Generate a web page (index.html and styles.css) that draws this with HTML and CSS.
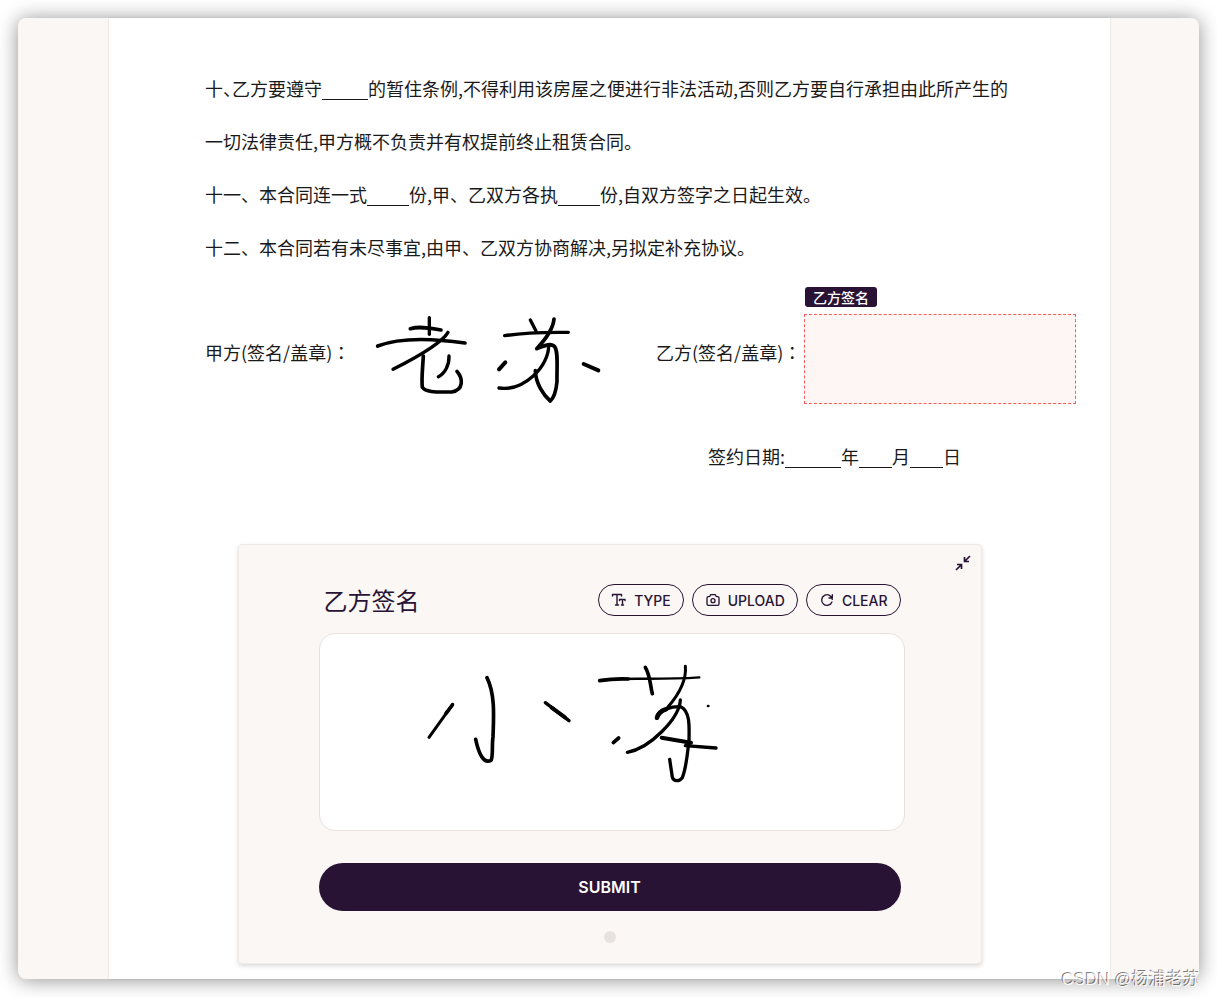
FILE: index.html
```html
<!DOCTYPE html>
<html lang="zh-CN">
<head>
    <meta charset="UTF-8">
    <meta name="viewport" content="width=device-width, initial-scale=1.0">
    <title>乙方签名</title>
    <link rel="stylesheet" href="styles.css">
</head>
<body>
<div class="window">
    <main class="page">
        <section class="contract">
            <p>十<span class="half">、</span>乙方要遵守<span class="blank blank-lg"></span>的暂住条例,不得利用该房屋之便进行非法活动,否则乙方要自行承担由此所产生的<br>一切法律责任,甲方概不负责并有权提前终止租赁合同。</p>
            <p>十一、本合同连一式<span class="blank blank-md"></span>份,甲、乙双方各执<span class="blank blank-md"></span>份,自双方签字之日起生效。</p>
            <p>十二、本合同若有未尽事宜,由甲、乙双方协商解决,另拟定补充协议。</p>

            <div class="sign-row">
                <span>甲方(签名/盖章)<span class="colon" lang="zh-TW">：</span></span>
                <svg class="ink" width="260" height="120" viewBox="3 -24 780 360">
                    <path d="M208 53V103" stroke-width="10"/>
                    <path d="M151 86C175 79 200 82 243 90" stroke-width="11"/>
                    <path d="M53 138C120 112 210 114 315 129" stroke-width="11"/>
                    <path d="M264 97C245 130 170 172 99 208" stroke-width="10"/>
                    <path d="M190 168C188 205 184 235 187 262C198 278 230 276 275 276C312 270 309 235 291 214" stroke-width="11"/>
                    <path d="M267 168C268 195 255 220 235 230" stroke-width="10"/>
                    <path d="M434 107C500 97 560 98 625 97" stroke-width="10"/>
                    <path d="M511 60L528 93" stroke-width="10"/>
                    <path d="M582 57C579 90 550 125 530 146C545 142 568 127 582 138C596 150 590 200 591 245C588 275 580 295 571 303C550 285 527 250 526 212" stroke-width="11"/>
                    <path d="M566 134C568 200 490 275 417 264" stroke-width="10"/>
                    <path d="M436 187L417 208" stroke-width="12"/>
                    <path d="M671 192L715 211" stroke-width="12"/>
                </svg>
                <span>乙方(签名/盖章)<span class="colon" lang="zh-TW">：</span></span>
                <div class="field">
                    <span class="field-tag">乙方签名</span>
                    <button type="button" class="field-area" aria-label="乙方签名"></button>
                </div>
            </div>

            <p class="date">签约日期:<span class="blank blank-year"></span>年<span class="blank blank-day"></span>月<span class="blank blank-day"></span>日</p>
        </section>

        <form class="panel">
            <button type="button" class="collapse" aria-label="收起">
                <svg class="icon" width="18" height="18" viewBox="0 0 18 18">
                    <path d="M2 16l5-5M3 10.500h4.500V15M16 2l-5 5M10.500 3v4.500H15"/>
                </svg>
            </button>

            <div class="panel-head">
                <h2>乙方签名</h2>
                <div class="tools">
                    <button type="button" class="tool">
                        <svg class="icon icon-type" width="16" height="16" viewBox="0 0 16 16">
                            <path d="M1.500 4V2.500h9V4M6 2.500v10.500M4.500 13h3M8.500 8.500V7.500h5.500v1M11.500 7.500V13M10.500 13h2"/>
                        </svg>
                        TYPE
                    </button>
                    <button type="button" class="tool">
                        <svg class="icon" width="16" height="16" viewBox="0 0 24 24">
                            <path d="M5 7h1a2 2 0 0 0 2-2a1 1 0 0 1 1-1h6a1 1 0 0 1 1 1a2 2 0 0 0 2 2h1a2 2 0 0 1 2 2v9a2 2 0 0 1-2 2H5a2 2 0 0 1-2-2V9a2 2 0 0 1 2-2"/>
                            <circle cx="12" cy="13" r="3"/>
                        </svg>
                        UPLOAD
                    </button>
                    <button type="button" class="tool">
                        <svg class="icon" width="16" height="16" viewBox="0 0 24 24">
                            <path d="M19.950 11a8 8 0 1 0-.5 4M20 4v5h-5"/>
                        </svg>
                        CLEAR
                    </button>
                </div>
            </div>

            <div class="pad">
                <svg class="ink" width="584" height="196" viewBox="-270 -48 1752 588">
                    <path d="M128 163L57 262" stroke-width="9"/>
                    <path d="M127 165L108 190" stroke-width="11"/>
                    <path d="M231 83C256 135 251 200 249 260C245 290 250 320 243 331C220 342 206 310 197 268" stroke-width="11"/>
                    <path d="M406 158L477 212" stroke-width="10"/>
                    <path d="M425 173L465 202" stroke-width="12"/>
                    <path d="M568 92C640 80 720 92 868 82" stroke-width="7"/>
                    <path d="M569 92C600 87 630 86 655 87" stroke-width="11"/>
                    <path d="M706 52C722 80 720 105 727 131" stroke-width="11"/>
                    <path d="M826 49C830 90 805 135 773 172" stroke-width="9"/>
                    <path d="M740 205C750 178 785 169 812 170C840 182 838 230 837 270C832 310 830 350 817 383C805 398 790 392 787 382L779 328" stroke-width="10"/>
                    <path d="M741 203C745 190 755 182 768 178" stroke-width="14"/>
                    <path d="M811 150C808 205 720 295 652 307" stroke-width="10"/>
                    <path d="M755 263L843 278" stroke-width="12"/>
                    <path d="M826 287L918 294" stroke-width="10"/>
                    <path d="M626 264L610 278" stroke-width="11"/>
                    <path d="M894 168h1" stroke-width="8"/>
                </svg>
            </div>

            <button type="submit" class="submit">SUBMIT</button>
            <span class="step"></span>
        </form>
    </main>
</div>
<div class="watermark">CSDN @杨浦老苏</div>
</body>
</html>
```

FILE: styles.css
```css
* {
    box-sizing: border-box;
}

body {
    margin: 0;
    padding: 18px;
    min-height: 100vh;
    display: flex;
    position: relative;
    background: #fff;
    color: #1a1a1a;
    font-family: Inter, "Noto Sans CJK SC", sans-serif;
}

.window {
    flex: 1;
    display: flex;
    padding: 0 89px 0 91px;
    background: #faf7f5;
    border-radius: 8px;
    box-shadow: 0 1px 20px rgba(0, 0, 0, 0.44);
}

.page {
    flex: 1;
    padding: 44px 0 15px;
    background: #fff;
    box-shadow: 0 0 2px rgba(0, 0, 0, 0.15);
}

/* contract text */
.contract {
    padding-left: 96px;
    font-family: "Noto Sans CJK SC", sans-serif;
    font-size: 18px;
    line-height: 53px;
    white-space: nowrap;
}

.contract p {
    margin: 0;
}

.half {
    font-feature-settings: "halt";
}

.colon {
    font-family: "Noto Sans CJK TC", sans-serif;
}

.blank {
    display: inline-block;
    height: 20px;
    vertical-align: -4px;
    border-bottom: 1px solid #1a1a1a;
}

.blank-lg {
    width: 46px;
}

.blank-md {
    width: 42px;
}

.blank-year {
    width: 56px;
}

.blank-day {
    width: 33px;
}

.sign-row {
    display: grid;
    grid-template-columns: 156px 295px 148px 272px;
    align-items: center;
    height: 130px;
    margin-top: 13px;
}

.field {
    align-self: start;
    display: flex;
    flex-direction: column;
    align-items: flex-start;
    gap: 7px;
}

.field-tag {
    margin-left: 1px;
    padding: 0 8px;
    border-radius: 3px;
    background: #291334;
    color: #fff;
    font-size: 14px;
    font-weight: 500;
    line-height: 20px;
}

.field-area {
    width: 100%;
    height: 90px;
    padding: 0;
    border: 1px dashed #fa5c5c;
    background: #fef6f5;
}

.contract .date {
    margin: 13px 0 0 503px;
}

.ink {
    display: block;
    fill: none;
    stroke: #000;
    stroke-linecap: round;
    stroke-linejoin: round;
}

/* signing panel */
.panel {
    position: relative;
    max-width: 744px;
    margin: 61px auto 0;
    padding: 39px 80px 20px;
    border: 1px solid #efeae6;
    border-radius: 4px;
    background: #faf7f5;
    box-shadow: 0 2px 4px rgba(0, 0, 0, 0.15);
}

.icon {
    flex: none;
    fill: none;
    stroke: currentColor;
    stroke-width: 2;
    stroke-linecap: round;
    stroke-linejoin: round;
}

.icon-type {
    stroke-width: 1.4;
}

.collapse {
    position: absolute;
    top: 9px;
    right: 9px;
    padding: 0;
    border: 0;
    background: none;
    color: #291334;
    line-height: 0;
    cursor: pointer;
}

.collapse .icon {
    stroke-width: 1.7;
    stroke-linecap: butt;
    stroke-linejoin: miter;
}

.panel-head {
    display: flex;
    justify-content: space-between;
    align-items: center;
    height: 32px;
}

.panel-head h2 {
    margin: 3px 0 0 5px;
    color: #291334;
    font-size: 24px;
    font-weight: 400;
    line-height: 32px;
}

.tools {
    display: flex;
    gap: 8px;
}

.tool {
    display: flex;
    align-items: center;
    gap: 7px;
    height: 32px;
    padding: 0 12px;
    border: 1px solid #291334;
    border-radius: 16px;
    background: none;
    color: #291334;
    font-family: inherit;
    font-size: 14px;
    font-weight: 500;
    cursor: pointer;
}

.pad {
    width: calc(100% + 4px);
    margin-top: 17px;
    overflow: hidden;
    border: 1px solid #e7e2df;
    border-radius: 16px;
    background: #fff;
}

.submit {
    display: block;
    width: 100%;
    height: 48px;
    margin-top: 32px;
    border: 0;
    border-radius: 24px;
    background: #291334;
    color: #fff;
    font-family: inherit;
    font-size: 16px;
    font-weight: 600;
    cursor: pointer;
}

.step {
    display: block;
    width: 12px;
    height: 12px;
    margin: 20px auto 0;
    border-radius: 50%;
    background: #e7e2df;
}

.watermark {
    position: absolute;
    right: 17px;
    bottom: 5px;
    color: rgba(255, 255, 255, 0.9);
    font-family: "Liberation Sans", "Noto Sans CJK SC", sans-serif;
    font-size: 17px;
    line-height: 24px;
    text-shadow: -1px -1px 0 rgba(0, 0, 0, 0.5);
}
```
